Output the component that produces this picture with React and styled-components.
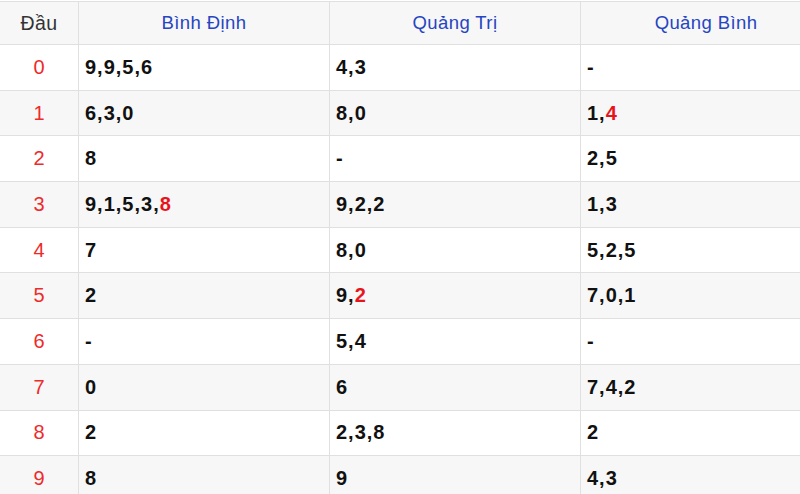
import React from "react";
import styled, { createGlobalStyle } from "styled-components";

const GlobalStyle = createGlobalStyle`
  html, body {
    margin: 0;
    padding: 0;
    background: #ffffff;
    overflow: hidden;
  }
  body {
    font-family: "Liberation Sans", Arial, sans-serif;
  }
`;

const provinces = ["Bình Định", "Quảng Trị", "Quảng Bình"];

// each cell: plain part, then the highlighted (red) last digit if any
const rows = [
  [["9,9,5,6"], ["4,3"], ["-"]],
  [["6,3,0"], ["8,0"], ["1,", "4"]],
  [["8"], ["-"], ["2,5"]],
  [["9,1,5,3,", "8"], ["9,2,2"], ["1,3"]],
  [["7"], ["8,0"], ["5,2,5"]],
  [["2"], ["9,", "2"], ["7,0,1"]],
  [["-"], ["5,4"], ["-"]],
  [["0"], ["6"], ["7,4,2"]],
  [["2"], ["2,3,8"], ["2"]],
  [["8"], ["9"], ["4,3"]],
];

function App() {
  return (
    <>
      <GlobalStyle />
      <Wrap>
        <Table>
          <colgroup>
            <col style={{ width: 79 }} />
            <col style={{ width: 251 }} />
            <col style={{ width: 251 }} />
            <col style={{ width: 251 }} />
          </colgroup>
          <thead>
            <HeadRow>
              <HeadCell>Đầu</HeadCell>
              {provinces.map((p) => (
                <HeadCell key={p} $link>
                  {p}
                </HeadCell>
              ))}
            </HeadRow>
          </thead>
          <tbody>
            {rows.map((cells, i) => (
              <Row key={i} $odd={i % 2 === 1}>
                <HeadNum>{i}</HeadNum>
                {cells.map((parts, j) => (
                  <Cell key={j}>
                    {parts[0]}
                    {parts[1] && <Hot>{parts[1]}</Hot>}
                  </Cell>
                ))}
              </Row>
            ))}
          </tbody>
        </Table>
      </Wrap>
    </>
  );
}

const Wrap = styled.div`
  width: 800px;
  height: 494px;
  overflow: hidden;
  padding-top: 1px;
  box-sizing: border-box;
`;

const Table = styled.table`
  width: 832px;
  border-collapse: collapse;
  table-layout: fixed;
  margin-left: -1px;
`;

const HeadRow = styled.tr`
  background: #f7f7f7;
  height: 43px;
`;

const HeadCell = styled.th`
  border: 1px solid #e0e0e0;
  font-weight: 400;
  font-size: 18.5px;
  letter-spacing: 0.4px;
  text-align: center;
  color: ${(p) => (p.$link ? "#2545c2" : "#333333")};
  padding: 0;

  &:first-child {
    font-size: 19.5px;
  }
`;

const Row = styled.tr`
  background: ${(p) => (p.$odd ? "#f7f7f7" : "#ffffff")};
  height: 45.7px;
`;

const HeadNum = styled.td`
  border: 1px solid #e0e0e0;
  text-align: center;
  color: #ee2a2a;
  font-size: 20px;
  padding: 0;
`;

const Cell = styled.td`
  border: 1px solid #e0e0e0;
  padding: 0 0 0 6px;
  font-size: 20px;
  letter-spacing: 1px;
  font-weight: 700;
  color: #111111;
`;

const Hot = styled.span`
  color: #e8141c;
`;

export default App;
